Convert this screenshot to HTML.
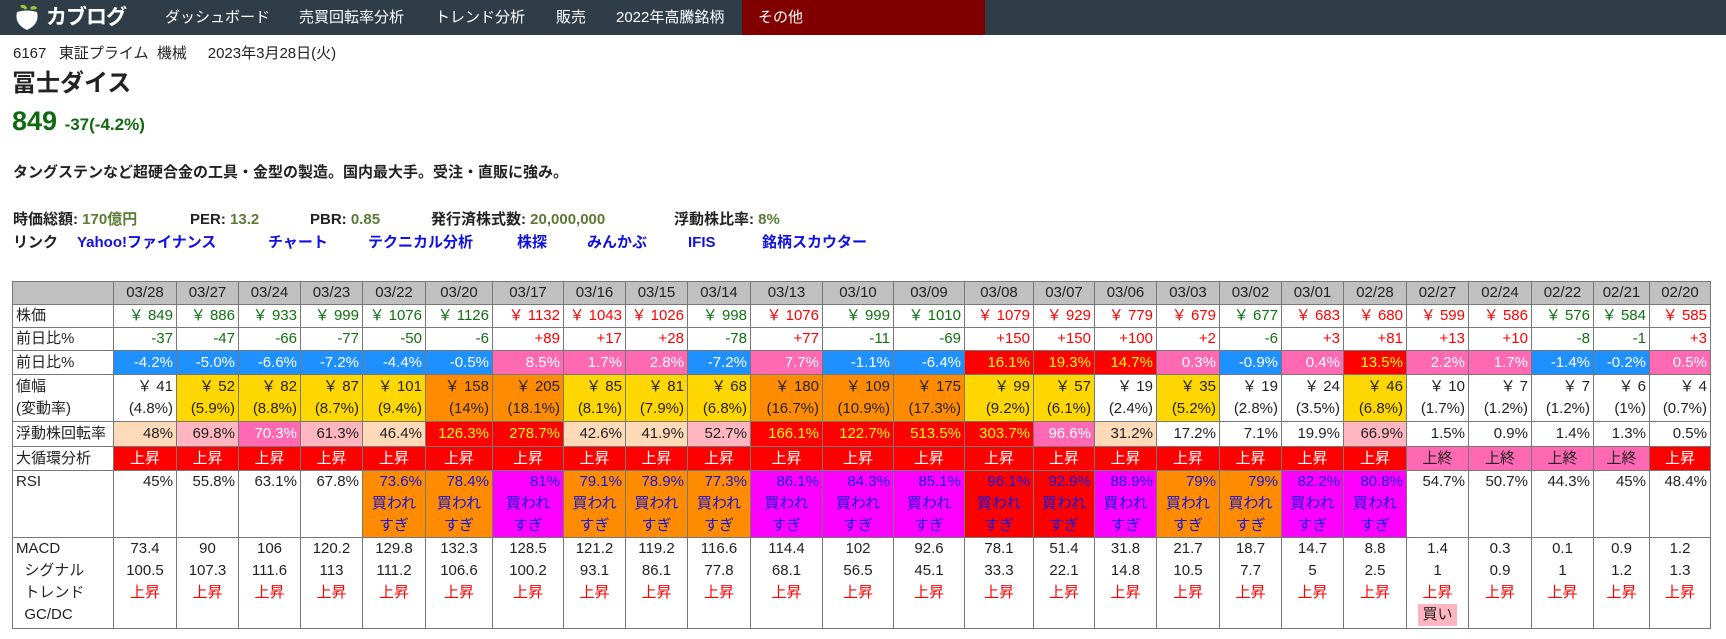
<!DOCTYPE html>
<html><head><meta charset="utf-8">
<style>
*{margin:0;padding:0;box-sizing:border-box}
body{width:1726px;height:639px;background:#fff;font-family:"Liberation Sans","Noto Sans CJK JP",sans-serif;color:#222;position:relative;overflow:hidden}
.nav{position:absolute;left:0;top:0;width:1726px;height:35px;background:#2f3d49}
.nav span{position:absolute;top:0;line-height:35px;color:#fff;font-size:15px}
.oth{position:absolute;left:742px;top:0;width:243px;height:35px;background:#800000}
.a{position:absolute;white-space:nowrap;line-height:20px}
.b{font-weight:bold;font-size:15px}
.g{color:#5b7a34}
.l{color:#1010e0}
table{position:absolute;left:12px;top:281px;border-collapse:collapse;table-layout:fixed;font-size:15px}
td{border:1px solid #777;padding:0 3px;text-align:right;white-space:nowrap;line-height:22px;vertical-align:middle;overflow:hidden}
td.h{text-align:left}
tr.hd td{background:#c0c0c0;text-align:center}
.gr{color:#107010}.rd{color:#f00}
.B{background:#1e90ff;color:#fff}.P{background:#ff69b4;color:#fff}.R{background:#f00;color:#ff0}
.Y{background:#ffd700}.O{background:#ff8c00}.pe{background:#ffdab9}.lp{background:#ffb6c1}.M{background:#f0f}
.cy td.x{text-align:center;color:#fff;background:#f00}
.cy td.u{text-align:center;color:#222;background:#ff69b4}
.rsi td{vertical-align:top}
.rsi td.c{color:#1515e0}
.rsi td.c div{text-align:center}
.mac td{text-align:center;vertical-align:top}
.mac td.h{text-align:left}
.buy{background:#ffb6c1;display:inline-block;padding:0 4px;color:#222}
</style></head><body>
<div class="nav">
 <svg style="position:absolute;left:12px;top:4px" width="30" height="28" viewBox="0 0 30 28"><path d="M5 8 Q15 5 25 8 Q28 20 15 26 Q2 20 5 8Z" fill="#fff"/><path d="M9 3 q3 -2 5 2" stroke="#9c3" stroke-width="3" fill="none"/><path d="M19 5 q3 -3 5 0" stroke="#9c3" stroke-width="3" fill="none"/></svg>
 <span style="left:46px;font-size:21px;font-weight:bold;letter-spacing:-1px">カブログ</span>
 <div class="oth"></div>
 <span style="left:165px">ダッシュボード</span>
 <span style="left:299px">売買回転率分析</span>
 <span style="left:435px">トレンド分析</span>
 <span style="left:556px">販売</span>
 <span style="left:616px">2022年高騰銘柄</span>
 <span style="left:758px">その他</span>
</div>
<div class="a" style="left:13px;top:44px;font-size:15px">6167&nbsp;&nbsp;&nbsp;東証プライム&nbsp;&nbsp;機械&nbsp;&nbsp;&nbsp;&nbsp;&nbsp;2023年3月28日(火)</div>
<div class="a" style="left:12px;top:70px;font-size:24px;line-height:28px;font-weight:bold">冨士ダイス</div>
<div class="a" style="left:12px;top:105px;font-size:27px;line-height:32px;font-weight:bold;color:#106810">849 <span style="font-size:17px">-37(-4.2%)</span></div>
<div class="a b" style="left:13px;top:163px">タングステンなど超硬合金の工具・金型の製造。国内最大手。受注・直販に強み。</div>
<div class="a b" style="left:13px;top:210px">時価総額: <span class="g">170億円</span></div>
<div class="a b" style="left:190px;top:210px">PER: <span class="g">13.2</span></div>
<div class="a b" style="left:310px;top:210px">PBR: <span class="g">0.85</span></div>
<div class="a b" style="left:431px;top:210px">発行済株式数: <span class="g">20,000,000</span></div>
<div class="a b" style="left:674px;top:210px">浮動株比率: <span class="g">8%</span></div>
<div class="a b" style="left:13px;top:233px">リンク</div>
<div class="a b l" style="left:77px;top:233px">Yahoo!ファイナンス</div>
<div class="a b l" style="left:268px;top:233px">チャート</div>
<div class="a b l" style="left:368px;top:233px">テクニカル分析</div>
<div class="a b l" style="left:517px;top:233px">株探</div>
<div class="a b l" style="left:587px;top:233px">みんかぶ</div>
<div class="a b l" style="left:688px;top:233px">IFIS</div>
<div class="a b l" style="left:762px;top:233px">銘柄スカウター</div>
<table>
<colgroup><col style="width:101px"><col style="width:63px"><col style="width:62px"><col style="width:62px"><col style="width:62px"><col style="width:63px"><col style="width:67px"><col style="width:71px"><col style="width:62px"><col style="width:62px"><col style="width:63px"><col style="width:72px"><col style="width:71px"><col style="width:71px"><col style="width:69px"><col style="width:61px"><col style="width:62px"><col style="width:63px"><col style="width:62px"><col style="width:62px"><col style="width:63px"><col style="width:62px"><col style="width:63px"><col style="width:62px"><col style="width:56px"><col style="width:61px"></colgroup>
<tr class="hd" style="height:23px"><td></td><td>03/28</td><td>03/27</td><td>03/24</td><td>03/23</td><td>03/22</td><td>03/20</td><td>03/17</td><td>03/16</td><td>03/15</td><td>03/14</td><td>03/13</td><td>03/10</td><td>03/09</td><td>03/08</td><td>03/07</td><td>03/06</td><td>03/03</td><td>03/02</td><td>03/01</td><td>02/28</td><td>02/27</td><td>02/24</td><td>02/22</td><td>02/21</td><td>02/20</td></tr>
<tr style="height:23px"><td class="h">株価</td><td class="gr">￥ 849</td><td class="gr">￥ 886</td><td class="gr">￥ 933</td><td class="gr">￥ 999</td><td class="gr">￥ 1076</td><td class="gr">￥ 1126</td><td class="rd">￥ 1132</td><td class="rd">￥ 1043</td><td class="rd">￥ 1026</td><td class="gr">￥ 998</td><td class="rd">￥ 1076</td><td class="gr">￥ 999</td><td class="gr">￥ 1010</td><td class="rd">￥ 1079</td><td class="rd">￥ 929</td><td class="rd">￥ 779</td><td class="rd">￥ 679</td><td class="gr">￥ 677</td><td class="rd">￥ 683</td><td class="rd">￥ 680</td><td class="rd">￥ 599</td><td class="rd">￥ 586</td><td class="gr">￥ 576</td><td class="gr">￥ 584</td><td class="rd">￥ 585</td></tr>
<tr style="height:23px"><td class="h">前日比%</td><td class="gr">-37</td><td class="gr">-47</td><td class="gr">-66</td><td class="gr">-77</td><td class="gr">-50</td><td class="gr">-6</td><td class="rd">+89</td><td class="rd">+17</td><td class="rd">+28</td><td class="gr">-78</td><td class="rd">+77</td><td class="gr">-11</td><td class="gr">-69</td><td class="rd">+150</td><td class="rd">+150</td><td class="rd">+100</td><td class="rd">+2</td><td class="gr">-6</td><td class="rd">+3</td><td class="rd">+81</td><td class="rd">+13</td><td class="rd">+10</td><td class="gr">-8</td><td class="gr">-1</td><td class="rd">+3</td></tr>
<tr style="height:24px"><td class="h">前日比%</td><td class="B">-4.2%</td><td class="B">-5.0%</td><td class="B">-6.6%</td><td class="B">-7.2%</td><td class="B">-4.4%</td><td class="B">-0.5%</td><td class="P">8.5%</td><td class="P">1.7%</td><td class="P">2.8%</td><td class="B">-7.2%</td><td class="P">7.7%</td><td class="B">-1.1%</td><td class="B">-6.4%</td><td class="R">16.1%</td><td class="R">19.3%</td><td class="R">14.7%</td><td class="P">0.3%</td><td class="B">-0.9%</td><td class="P">0.4%</td><td class="R">13.5%</td><td class="P">2.2%</td><td class="P">1.7%</td><td class="B">-1.4%</td><td class="B">-0.2%</td><td class="P">0.5%</td></tr>
<tr style="height:47px"><td class="h">値幅<br>(変動率)</td><td>￥ 41<br>(4.8%)</td><td class="Y">￥ 52<br>(5.9%)</td><td class="Y">￥ 82<br>(8.8%)</td><td class="Y">￥ 87<br>(8.7%)</td><td class="Y">￥ 101<br>(9.4%)</td><td class="O">￥ 158<br>(14%)</td><td class="O">￥ 205<br>(18.1%)</td><td class="Y">￥ 85<br>(8.1%)</td><td class="Y">￥ 81<br>(7.9%)</td><td class="Y">￥ 68<br>(6.8%)</td><td class="O">￥ 180<br>(16.7%)</td><td class="O">￥ 109<br>(10.9%)</td><td class="O">￥ 175<br>(17.3%)</td><td class="Y">￥ 99<br>(9.2%)</td><td class="Y">￥ 57<br>(6.1%)</td><td>￥ 19<br>(2.4%)</td><td class="Y">￥ 35<br>(5.2%)</td><td>￥ 19<br>(2.8%)</td><td>￥ 24<br>(3.5%)</td><td class="Y">￥ 46<br>(6.8%)</td><td>￥ 10<br>(1.7%)</td><td>￥ 7<br>(1.2%)</td><td>￥ 7<br>(1.2%)</td><td>￥ 6<br>(1%)</td><td>￥ 4<br>(0.7%)</td></tr>
<tr style="height:25px"><td class="h">浮動株回転率</td><td class="pe">48%</td><td class="lp">69.8%</td><td class="P">70.3%</td><td class="lp">61.3%</td><td class="pe">46.4%</td><td class="R">126.3%</td><td class="R">278.7%</td><td class="pe">42.6%</td><td class="pe">41.9%</td><td class="lp">52.7%</td><td class="R">166.1%</td><td class="R">122.7%</td><td class="R">513.5%</td><td class="R">303.7%</td><td class="P">96.6%</td><td class="pe">31.2%</td><td>17.2%</td><td>7.1%</td><td>19.9%</td><td class="lp">66.9%</td><td>1.5%</td><td>0.9%</td><td>1.4%</td><td>1.3%</td><td>0.5%</td></tr>
<tr class="cy" style="height:24px"><td class="h">大循環分析</td><td class="x">上昇</td><td class="x">上昇</td><td class="x">上昇</td><td class="x">上昇</td><td class="x">上昇</td><td class="x">上昇</td><td class="x">上昇</td><td class="x">上昇</td><td class="x">上昇</td><td class="x">上昇</td><td class="x">上昇</td><td class="x">上昇</td><td class="x">上昇</td><td class="x">上昇</td><td class="x">上昇</td><td class="x">上昇</td><td class="x">上昇</td><td class="x">上昇</td><td class="x">上昇</td><td class="x">上昇</td><td class="u">上終</td><td class="u">上終</td><td class="u">上終</td><td class="u">上終</td><td class="x">上昇</td></tr>
<tr class="rsi" style="height:66px"><td class="h">RSI</td><td>45%</td><td>55.8%</td><td>63.1%</td><td>67.8%</td>
<td class="c O">73.6%<div>買われ<br>すぎ</div></td><td class="c O">78.4%<div>買われ<br>すぎ</div></td><td class="c M">81%<div>買われ<br>すぎ</div></td><td class="c O">79.1%<div>買われ<br>すぎ</div></td><td class="c O">78.9%<div>買われ<br>すぎ</div></td><td class="c O">77.3%<div>買われ<br>すぎ</div></td><td class="c M">86.1%<div>買われ<br>すぎ</div></td><td class="c M">84.3%<div>買われ<br>すぎ</div></td><td class="c M">85.1%<div>買われ<br>すぎ</div></td><td class="c" style="background:#f00">96.1%<div>買われ<br>すぎ</div></td><td class="c" style="background:#f00">92.9%<div>買われ<br>すぎ</div></td><td class="c M">88.9%<div>買われ<br>すぎ</div></td><td class="c O">79%<div>買われ<br>すぎ</div></td><td class="c O">79%<div>買われ<br>すぎ</div></td><td class="c M">82.2%<div>買われ<br>すぎ</div></td><td class="c M">80.8%<div>買われ<br>すぎ</div></td>
<td>54.7%</td><td>50.7%</td><td>44.3%</td><td>45%</td><td>48.4%</td></tr>
<tr class="mac" style="height:91px"><td class="h">MACD<br>&nbsp;&nbsp;シグナル<br>&nbsp;&nbsp;トレンド<br>&nbsp;&nbsp;GC/DC</td>
<td>73.4<br>100.5<br><span class="rd">上昇</span></td><td>90<br>107.3<br><span class="rd">上昇</span></td><td>106<br>111.6<br><span class="rd">上昇</span></td><td>120.2<br>113<br><span class="rd">上昇</span></td><td>129.8<br>111.2<br><span class="rd">上昇</span></td><td>132.3<br>106.6<br><span class="rd">上昇</span></td><td>128.5<br>100.2<br><span class="rd">上昇</span></td><td>121.2<br>93.1<br><span class="rd">上昇</span></td><td>119.2<br>86.1<br><span class="rd">上昇</span></td><td>116.6<br>77.8<br><span class="rd">上昇</span></td><td>114.4<br>68.1<br><span class="rd">上昇</span></td><td>102<br>56.5<br><span class="rd">上昇</span></td><td>92.6<br>45.1<br><span class="rd">上昇</span></td><td>78.1<br>33.3<br><span class="rd">上昇</span></td><td>51.4<br>22.1<br><span class="rd">上昇</span></td><td>31.8<br>14.8<br><span class="rd">上昇</span></td><td>21.7<br>10.5<br><span class="rd">上昇</span></td><td>18.7<br>7.7<br><span class="rd">上昇</span></td><td>14.7<br>5<br><span class="rd">上昇</span></td><td>8.8<br>2.5<br><span class="rd">上昇</span></td><td>1.4<br>1<br><span class="rd">上昇</span><br><span class="buy">買い</span></td><td>0.3<br>0.9<br><span class="rd">上昇</span></td><td>0.1<br>1<br><span class="rd">上昇</span></td><td>0.9<br>1.2<br><span class="rd">上昇</span></td><td>1.2<br>1.3<br><span class="rd">上昇</span></td></tr>
</table>
</body></html>
